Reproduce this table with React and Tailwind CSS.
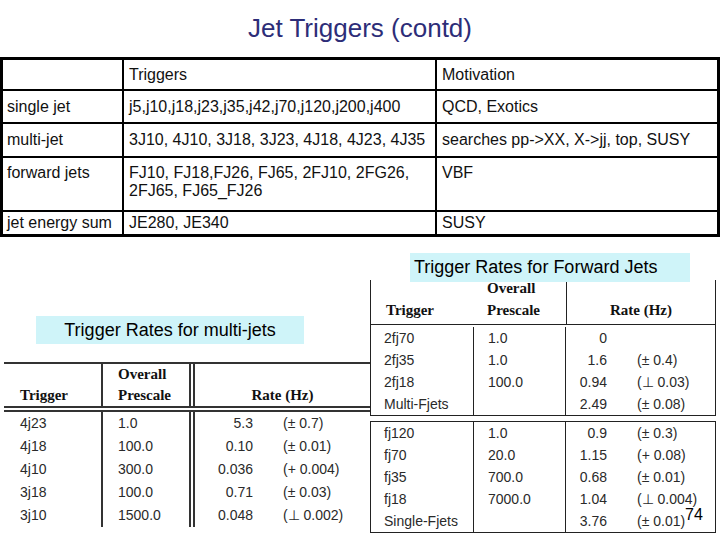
import React from 'react';

const topRows = [
    { a: '', b: ['Triggers'], c: 'Motivation', h: 'h-[29px]', top: false },
    { a: 'single jet', b: ['j5,j10,j18,j23,j35,j42,j70,j120,j200,j400'], c: 'QCD, Exotics', h: 'h-[31px]', top: false },
    { a: 'multi-jet', b: ['3J10, 4J10, 3J18, 3J23, 4J18, 4J23, 4J35'], c: 'searches pp->XX, X->jj, top, SUSY', h: 'h-[32px]', top: false },
    { a: 'forward jets', b: ['FJ10, FJ18,FJ26, FJ65, 2FJ10, 2FG26,', '2FJ65, FJ65_FJ26'], c: 'VBF', h: 'h-[52px]', top: true },
    { a: 'jet energy sum', b: ['JE280, JE340'], c: 'SUSY', h: 'h-[22px]', top: false },
];

const multiRows = [
    ['4j23', '1.0', '5.3', '(± 0.7)'],
    ['4j18', '100.0', '0.10', '(± 0.01)'],
    ['4j10', '300.0', '0.036', '(+ 0.004)'],
    ['3j18', '100.0', '0.71', '(± 0.03)'],
    ['3j10', '1500.0', '0.048', '(⊥ 0.002)'],
];

const fwdMulti = [
    ['2fj70', '1.0', '0', ''],
    ['2fj35', '1.0', '1.6', '(± 0.4)'],
    ['2fj18', '100.0', '0.94', '(⊥ 0.03)'],
    ['Multi-Fjets', '', '2.49', '(± 0.08)'],
];

const fwdSingle = [
    ['fj120', '1.0', '0.9', '(± 0.3)'],
    ['fj70', '20.0', '1.15', '(+ 0.08)'],
    ['fj35', '700.0', '0.68', '(± 0.01)'],
    ['fj18', '7000.0', '1.04', '(⊥ 0.004)'],
    ['Single-Fjets', '', '3.76', '(± 0.01)'],
];

const serif = "font-['Liberation_Serif','Times_New_Roman',serif] font-bold text-[15px] text-[#111]";

const Label = ({ children, className }) => (
    <div className={`absolute bg-[#cff4f9] text-[18px] text-black flex items-center ${className}`}>
        {children}
    </div>
);

const MultiJetTable = () => (
    <div className="w-[366px] border-t-2 border-[#333]">
        <div className="flex h-[48px] border-b-[6px] border-double border-[#333]">
            <div className={`w-[99px] border-r-2 border-[#333] pl-4 flex items-end leading-[21px] ${serif}`}>Trigger</div>
            <div className={`w-[92px] border-r-[6px] border-double border-[#333] pl-[15px] flex flex-col justify-end leading-[21px] ${serif}`}>
                <span>Overall</span>
                <span>Prescale</span>
            </div>
            <div className={`flex-1 flex items-end justify-center leading-[21px] ${serif}`}>Rate (Hz)</div>
        </div>
        <div className="flex text-[14px] text-[#2a2a2a]">
            <div className="w-[99px] border-r-2 border-[#333] pl-4">
                {multiRows.map(r => <div key={r[0]} className="h-[23px] flex items-center">{r[0]}</div>)}
            </div>
            <div className="w-[92px] border-r-[6px] border-double border-[#333] pl-[15px]">
                {multiRows.map(r => <div key={r[0]} className="h-[23px] flex items-center">{r[1]}</div>)}
            </div>
            <div className="flex-1">
                {multiRows.map(r => (
                    <div key={r[0]} className="h-[23px] flex items-center">
                        <span className="w-[58px] text-right">{r[2]}</span>
                        <span className="ml-[30px]">{r[3]}</span>
                    </div>
                ))}
            </div>
        </div>
    </div>
);

const FwdBox = ({ rows, className }) => (
    <div className={`flex border-[1.5px] border-[#222] text-[14px] text-[#2a2a2a] ${className}`}>
        <div className="w-[103px] border-r-[1.5px] border-[#222] pl-[13px]">
            {rows.map(r => <div key={r[0]} className="h-[22px] flex items-center">{r[0]}</div>)}
        </div>
        <div className="w-[92px] border-r-[1.5px] border-[#222] pl-[14px]">
            {rows.map(r => <div key={r[0]} className="h-[22px] flex items-center">{r[1]}</div>)}
        </div>
        <div className="flex-1">
            {rows.map(r => (
                <div key={r[0]} className="h-[22px] flex items-center">
                    <span className="w-[41px] text-right">{r[2]}</span>
                    <span className="ml-[30px]">{r[3]}</span>
                </div>
            ))}
        </div>
    </div>
);

const ForwardTable = () => (
    <div className="w-[346px]">
        <div className="flex h-[44px]">
            <div className={`w-[103px] border-l-[1.5px] border-[#222] pl-[15px] flex items-end pb-[3px] leading-[22px] ${serif}`}>Trigger</div>
            <div className={`w-[93px] pl-[14px] flex flex-col justify-end pb-[3px] leading-[22px] ${serif}`}>
                <span>Overall</span>
                <span>Prescale</span>
            </div>
            <div className={`flex-1 border-l-[1.5px] border-r-[1.5px] border-[#222] flex items-end justify-center pb-[3px] leading-[22px] ${serif}`}>Rate (Hz)</div>
        </div>
        <FwdBox rows={fwdMulti} className="pt-[2px]" />
        <FwdBox rows={fwdSingle} className="mt-[5px]" />
    </div>
);

export default function App() {
    return (
        <div className="w-[720px] h-[540px] bg-white relative overflow-hidden font-['Liberation_Sans',Arial,sans-serif]">
            <h1 className="h-[57px] flex items-center justify-center text-[26px] text-[#2d2d78]">Jet Triggers (contd)</h1>

            <div className="w-[720px] border-[3px] border-black text-[16px] text-[#111] leading-[18px]">
                {topRows.map((r, i) => (
                    <div key={i} className={`grid grid-cols-[119px_313px_1fr] ${i > 0 ? 'border-t-2 border-black' : ''}`}>
                        <div className={`${r.h} flex ${r.top ? 'items-start pt-[6px]' : 'items-center'} pl-[4px]`}>{r.a}</div>
                        <div className={`${r.h} flex flex-col ${r.top ? 'justify-start pt-[6px]' : 'justify-center'} border-l-2 border-black pl-[5px]`}>
                            {r.b.map(t => <span key={t}>{t}</span>)}
                        </div>
                        <div className={`${r.h} flex ${r.top ? 'items-start pt-[6px]' : 'items-center'} border-l-2 border-black pl-[5px]`}>{r.c}</div>
                    </div>
                ))}
            </div>

            <div className="flex">
                <div className="w-[370px] pl-[4px] pt-[125px]">
                    <MultiJetTable />
                </div>
                <div className="pt-[43px]">
                    <ForwardTable />
                </div>
            </div>

            <Label className="left-[410px] top-[253px] w-[280px] h-[29px] pl-[4px]">Trigger Rates for Forward Jets</Label>
            <Label className="left-[36px] top-[316px] w-[268px] h-[28px] justify-center">Trigger Rates for multi-jets</Label>

            <div className="absolute left-[685px] top-[503px] text-[16px] text-black">74</div>
        </div>
    );
}
